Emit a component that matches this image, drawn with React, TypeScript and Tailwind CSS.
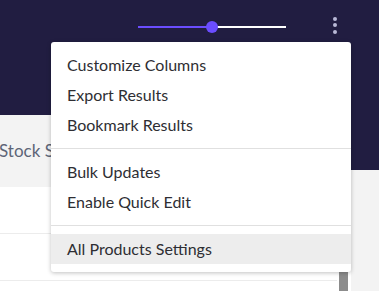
import React from "react";

const font = { fontFamily: "Lato, 'Open Sans', sans-serif" };

function Item({ label, active }: { label: string; active?: boolean }) {
  return (
    <div
      className={`h-[30px] flex items-center pl-4 pb-[1px] text-[16px] text-[#2e2e33] ${
        active ? "bg-[#ededed]" : ""
      }`}
    >
      {label}
    </div>
  );
}

function Sep() {
  return <div className="my-2 h-px bg-[#e0e0e0]" />;
}

export default function App() {
  return (
    <div
      className="relative w-[379px] h-[291px] overflow-hidden bg-white font-['Lato',sans-serif]"
      style={font}
    >
      {/* top header */}
      <div className="h-[115px] bg-[#211d41] flex items-start">
        <div className="ml-[138px] mt-[21px] relative w-[148px] h-[12px] flex items-center">
          <div className="h-[2px] w-[74px] bg-[#6b4dff]" />
          <div className="h-[2px] flex-1 bg-white" />
          <div className="absolute left-[68px] top-0 w-[12px] h-[12px] rounded-full bg-[#6b4dff]" />
        </div>
        <div className="ml-[47px] mt-[17px] flex flex-col gap-[2.3px]">
          <div className="w-[4px] h-[4px] rounded-full bg-[#b9b9d6]" />
          <div className="w-[4px] h-[4px] rounded-full bg-[#b9b9d6]" />
          <div className="w-[4px] h-[4px] rounded-full bg-[#b9b9d6]" />
        </div>
      </div>

      <div className="flex">
        {/* main table */}
        <div className="w-[351px] flex flex-col">
          <div className="h-[72px] bg-[#f3f3f3] flex items-center text-[17px] text-[#5d6577]">
            <span className="-ml-[1px]">Stock Status</span>
          </div>
          <div className="flex">
            <div className="w-[337px]">
              <div className="h-[47px] border-b border-[#ececec]" />
              <div className="h-[47px] border-b border-[#ececec]" />
            </div>
            <div className="w-[14px] flex flex-col">
              <div className="h-[85px]" />
              <div className="ml-[2px] w-[9px] h-[40px] bg-[#8c8c8c]" />
            </div>
          </div>
        </div>
        {/* right strip */}
        <div className="flex-1 flex flex-col">
          <div className="h-[55px] bg-[#211d41]" />
          <div className="flex-1 h-[200px] bg-[#f3f3f3]" />
        </div>
      </div>

      {/* dropdown menu */}
      <div className="absolute left-[51px] top-[42px] w-[300px] bg-white rounded-[3px] shadow-[0_1px_4px_rgba(0,0,0,0.25)] py-2">
        <Item label="Customize Columns" />
        <Item label="Export Results" />
        <Item label="Bookmark Results" />
        <Sep />
        <Item label="Bulk Updates" />
        <Item label="Enable Quick Edit" />
        <Sep />
        <Item label="All Products Settings" active />
      </div>
    </div>
  );
}
